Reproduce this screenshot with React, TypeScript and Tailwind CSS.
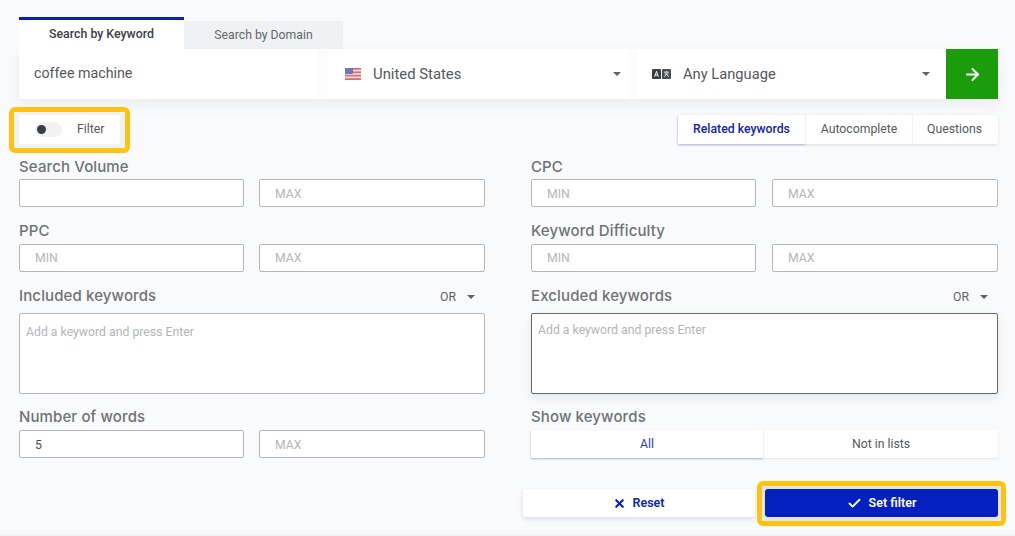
import React from "react";
import { ArrowRight, Check, X } from "lucide-react";

const Caret = () => (
  <svg width="8" height="4" viewBox="0 0 8 4" className="shrink-0">
    <path d="M0 0h8L4 4z" fill="#5f6368" />
  </svg>
);

const Flag = () => (
  <svg width="16" height="12" viewBox="0 0 16 12" className="shrink-0">
    <rect width="16" height="12" fill="#f3e5e6" />
    <rect y="0" width="16" height="1.7" fill="#e8666c" />
    <rect y="3.4" width="16" height="1.7" fill="#e8666c" />
    <rect y="6.8" width="16" height="1.7" fill="#e8666c" />
    <rect y="10.2" width="16" height="1.8" fill="#e8666c" />
    <rect width="8" height="6" fill="#6a78b8" />
  </svg>
);

const Lang = () => (
  <svg width="19" height="10" viewBox="0 0 19 11" preserveAspectRatio="none" className="shrink-0">
    <rect width="9" height="11" rx="1" fill="#3a3d42" />
    <rect x="10" width="9" height="11" rx="1" fill="#4a4d52" />
    <path d="M2.6 8.5 4.5 2.6 6.4 8.5M3.3 6.7h2.4" stroke="#fff" strokeWidth="1" fill="none" />
    <path d="M12 3.5h5M14.5 2.3v1.2M12.8 5.4h3.4M12.3 8.6l2.2-3 2.2 3" stroke="#fff" strokeWidth=".9" fill="none" />
  </svg>
);

const Label = ({ children }: { children: React.ReactNode }) => (
  <div className="h-5 font-['Inter',sans-serif] text-[15px] leading-[22px] font-medium tracking-[0.12px] text-[#6f7277]">
    {children}
  </div>
);

const Num = ({ placeholder, value, low }: { placeholder?: string; value?: string; low?: boolean }) => (
  <input
    readOnly
    placeholder={placeholder}
    defaultValue={value}
    className={
      low
        ? "h-7 w-full min-w-0 rounded-[2px] border border-[#b4b6b9] bg-white pt-[2px] pl-[15px] text-[12.25px] text-[#4a4d52] outline-none placeholder:text-[#b3b5b8]"
        : "h-7 w-full min-w-0 rounded-[2px] border border-[#b4b6b9] bg-white pl-[15px] text-[12.25px] text-[#4a4d52] outline-none placeholder:text-[#b3b5b8]"
    }
  />
);

const Pair = ({
  min,
  max,
  minValue,
  low,
  right,
}: {
  min?: string;
  max?: string;
  minValue?: string;
  low?: boolean;
  right?: boolean;
}) => (
  <div className={right ? "grid grid-cols-[225px_1fr] gap-4" : "grid grid-cols-[225px_1fr] gap-[15px]"}>
    <Num placeholder={min} value={minValue} low={low} />
    <Num placeholder={max} low={low} />
  </div>
);

const Or = () => (
  <div className="flex h-5 items-center gap-[11px] pt-1 pr-[10px] text-[12.25px] leading-4 text-[#5f6368]">
    OR <Caret />
  </div>
);

export default function App() {
  return (
    <div className="relative h-[536px] w-[1015px] overflow-hidden bg-[#f9fafc] pt-[17px] pr-[17px] pl-[19px] font-['Roboto',sans-serif]">
      <div className="flex items-end">
        <div className="flex h-8 w-[165px] items-center justify-center border-t-[3px] border-[#0a1fbd] bg-white text-[12.35px] font-medium text-[#3d4046]">
          Search by Keyword
        </div>
        <div className="flex h-7 w-[159px] items-center justify-center bg-[#eff2f5] text-[12.25px] text-[#63666b]">
          Search by Domain
        </div>
      </div>

      <div className="flex h-[50px] bg-[#fcfcfd] shadow-[0_6px_14px_rgba(0,0,0,0.06)]">
        <div className="flex w-[299px] items-center bg-white pl-[15px] text-[14.25px] text-[#55585d]">
          coffee machine
        </div>
        <div className="ml-2.5 flex w-[300px] items-center bg-white pr-[7px] pl-[17px] text-[14.85px] text-[#55585d]">
          <Flag />
          <span className="ml-3 flex-1">United States</span>
          <Caret />
        </div>
        <div className="ml-2.5 flex w-[308px] items-center bg-white pr-[16px] pl-[14px] text-[14.7px] text-[#55585d]">
          <Lang />
          <span className="ml-3 flex-1">Any Language</span>
          <Caret />
        </div>
        <div className="flex w-[52px] items-center justify-center bg-[#1a9c0b] text-white">
          <ArrowRight size={19} strokeWidth={2.5} />
        </div>
      </div>

      <div className="mt-4 flex h-[29px] justify-between">
        <div className="flex w-[101px] items-center rounded-[2px] bg-white pl-4 shadow-[0_0_0_5px_#f1f2f4]">
          <div className="flex h-[15px] w-[27px] items-center rounded-full bg-[#f0f2f4] pl-[2px]">
            <div className="h-[9px] w-[9px] rounded-full bg-[#3a3d42]" />
          </div>
          <span className="ml-[15px] text-[12.25px] text-[#55585d]">Filter</span>
        </div>
        <div className="flex rounded-[2px] bg-white text-[12.25px] shadow-[0_1px_3px_rgba(0,0,0,0.12)]">
          <div className="flex w-[127px] items-center justify-center font-medium text-[#1422b0] shadow-[0_1px_2px_rgba(20,34,176,0.25)]">
            Related keywords
          </div>
          <div className="flex w-[107px] items-center justify-center border-l border-[#f1f2f4] text-[#55585d]">
            Autocomplete
          </div>
          <div className="flex w-[86px] items-center justify-center border-l border-[#f1f2f4] pr-0.5 text-[#55585d]">
            Questions
          </div>
        </div>
      </div>

      <div className="mt-3 grid grid-cols-[466px_467px] gap-x-[46px]">
        <div>
          <Label>Search Volume</Label>
          <div className="mt-[3px]"><Pair max="MAX" low /></div>
        </div>
        <div>
          <Label>CPC</Label>
          <div className="mt-[3px]"><Pair min="MIN" max="MAX" low right /></div>
        </div>

        <div className="mt-[13px]">
          <Label>PPC</Label>
          <div className="mt-1"><Pair min="MIN" max="MAX" /></div>
        </div>
        <div className="mt-[13px]">
          <Label>Keyword Difficulty</Label>
          <div className="mt-1"><Pair min="MIN" max="MAX" right /></div>
        </div>

        <div className="mt-[13px]">
          <div className="flex justify-between">
            <Label>Included keywords</Label>
            <Or />
          </div>
          <textarea
            readOnly
            placeholder="Add a keyword and press Enter"
            className="mt-2 block h-[81px] w-full resize-none rounded-[2px] border border-[#b4b6b9] bg-white px-[6px] pt-[9px] text-[12.25px] text-[#4a4d52] outline-none placeholder:text-[#b3b5b8]"
          />
        </div>
        <div className="mt-[13px]">
          <div className="flex justify-between">
            <Label>Excluded keywords</Label>
            <Or />
          </div>
          <textarea
            readOnly
            placeholder="Add a keyword and press Enter"
            className="mt-2 block h-[81px] w-full resize-none rounded-[2px] border border-[#66696d] bg-white px-[6px] pt-[7px] text-[12.25px] text-[#4a4d52] shadow-[0_4px_10px_rgba(0,0,0,0.08)] outline-none placeholder:text-[#b3b5b8]"
          />
        </div>

        <div className="mt-3">
          <Label>Number of words</Label>
          <div className="mt-1"><Pair minValue="5" max="MAX" low /></div>
        </div>
        <div className="mt-3">
          <Label>Show keywords</Label>
          <div className="mt-1 flex h-7 rounded-[2px] bg-white text-[12.25px] shadow-[0_1px_2px_rgba(0,0,0,0.1)]">
            <div className="flex w-[232px] items-center justify-center text-[#2c3cc0] shadow-[0_1px_2px_rgba(20,34,176,0.25)]">
              All
            </div>
            <div className="flex flex-1 items-center justify-center border-l border-[#f1f2f4] text-[#55585d]">
              Not in lists
            </div>
          </div>
        </div>
      </div>

      <div className="mt-[31px] ml-[504px] flex h-7 gap-2.5 text-[12.5px] font-semibold">
        <div className="flex w-[232px] items-center justify-center gap-[6px] rounded-[2px] bg-white text-[#0a1fbd] shadow-[0_2px_5px_rgba(20,34,176,0.14)]">
          <X size={13} strokeWidth={4} />
          Reset
        </div>
        <div className="flex w-[233px] items-center justify-center gap-[7px] rounded-[3px] bg-[#0420c0] text-white shadow-[0_0_0_4px_#e3e5ee]">
          <Check size={15} strokeWidth={3} />
          Set filter
        </div>
      </div>

      <div className="absolute top-[107px] left-[9px] h-[46px] w-[121px] rounded-[6px] border-[5px] border-[#ffc20e]" />
      <div className="absolute top-[481px] left-[757px] h-[45px] w-[249px] rounded-[6px] border-[5px] border-[#ffc20e]" />
      <div className="absolute right-0 bottom-0 left-0 h-0.5 bg-[#f1f2f4]" />
    </div>
  );
}
